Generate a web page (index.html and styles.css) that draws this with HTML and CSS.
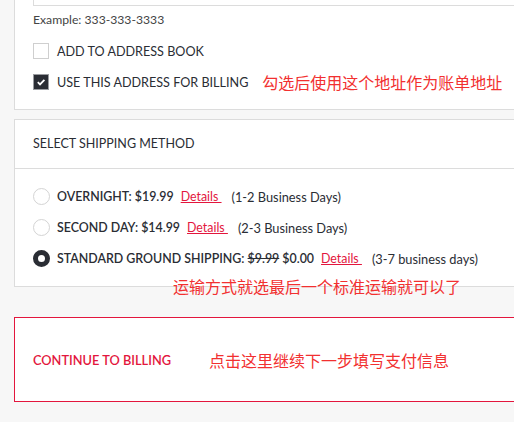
FILE: index.html
```html
<!DOCTYPE html>
<html lang="en">
<head>
    <meta charset="UTF-8">
    <meta name="viewport" content="width=device-width, initial-scale=1.0">
    <title>Shipping</title>
    <link rel="stylesheet" href="styles.css">
</head>
<body>
    <div class="page">
        <div class="card address">
            <div class="field"></div>
            <div class="hint">Example: 333-333-3333</div>
            <div class="check-row first">
                <span class="checkbox"></span>
                <span class="label">ADD TO ADDRESS BOOK</span>
            </div>
            <div class="check-row">
                <span class="checkbox checked">
                    <svg width="10" height="10" viewBox="0 0 10 10"><path d="M1.8 5.2 L4 7.4 L8.4 2.8" fill="none" stroke="#fff" stroke-width="1.8"/></svg>
                </span>
                <span class="label">USE THIS ADDRESS FOR BILLING</span>
                <span class="note note-billing">勾选后使用这个地址作为账单地址</span>
            </div>
        </div>

        <div class="card shipping">
            <div class="card-head">SELECT SHIPPING METHOD</div>
            <div class="options">
                <div class="option">
                    <span class="radio"></span>
                    <span class="opt-name">OVERNIGHT: $19.99</span>
                    <a class="details" href="#">Details </a>
                    <span class="days">(1-2 Business Days)</span>
                </div>
                <div class="option">
                    <span class="radio"></span>
                    <span class="opt-name">SECOND DAY: $14.99</span>
                    <a class="details" href="#">Details </a>
                    <span class="days">(2-3 Business Days)</span>
                </div>
                <div class="option">
                    <span class="radio selected"></span>
                    <span class="opt-name">STANDARD GROUND SHIPPING: <s>$9.99</s> $0.00</span>
                    <a class="details" href="#">Details </a>
                    <span class="days">(3-7 business days)</span>
                </div>
            </div>
            <span class="note note-shipping">运输方式就选最后一个标准运输就可以了</span>
        </div>

        <div class="continue">
            <span class="continue-text">CONTINUE TO BILLING</span>
            <span class="note note-continue">点击这里继续下一步填写支付信息</span>
        </div>
    </div>
</body>
</html>
```

FILE: styles.css
```css
body {
    margin: 0;
    background-color: #f7f7f7;
    font-family: Lato, "Noto Sans CJK SC", sans-serif;
    color: #2a2d34;
    overflow: hidden;
}
.page {
    padding-left: 14px;
    margin-right: -20px;
}
.card {
    background-color: white;
    border: 1px solid #dcdcdc;
}
.address {
    margin-top: -60px;
    padding: 20px 18px 19px;
}
.field {
    height: 45px;
    box-sizing: border-box;
    border: 1px solid #dcdcdc;
    margin-right: -18px;
}
.hint {
    margin-top: 6px;
    font-size: 12.2px;
    line-height: 15px;
    color: #444;
}
.check-row {
    display: flex;
    align-items: center;
    gap: 8px;
    margin-top: 15px;
    height: 16px;
    font-size: 12.6px;
    white-space: nowrap;
}
.check-row.first { margin-top: 16px; }
.checkbox {
    flex-shrink: 0;
    width: 16px;
    height: 16px;
    box-sizing: border-box;
    border: 1px solid #cfcfcf;
    background: white;
    display: flex;
    align-items: center;
    justify-content: center;
}
.checkbox.checked {
    background-color: #2a2d34;
    border-color: #9a9ca0;
}
.note {
    font-family: "Noto Sans CJK SC", sans-serif;
    color: #f23030;
    font-size: 16px;
    line-height: 18px;
    white-space: nowrap;
}
.note-billing {
    margin-left: 6px;
}
.shipping {
    margin-top: 9px;
    position: relative;
}
.card-head {
    height: 48px;
    line-height: 48px;
    padding-left: 18px;
    font-size: 12.5px;
    border-bottom: 1px solid #dcdcdc;
}
.options {
    padding: 19px 18px 19px;
    display: flex;
    flex-direction: column;
    gap: 14px;
}
.option {
    display: flex;
    align-items: center;
    height: 17px;
    font-size: 12.4px;
    white-space: nowrap;
}
.radio {
    flex-shrink: 0;
    width: 17px;
    height: 17px;
    box-sizing: border-box;
    border: 1px solid #d4d4d4;
    border-radius: 50%;
    margin-right: 7px;
}
.radio.selected {
    border: 5px solid #2a2d34;
    background: white;
}
.opt-name {
    font-weight: 600;
}
.details {
    color: #e3163d;
    margin-left: 7px;
    text-decoration: underline;
    white-space: pre;
}
.days {
    margin-left: 10px;
    font-size: 12.8px;
}
.note-shipping {
    position: absolute;
    left: 158px;
    bottom: -9px;
}
.continue {
    margin-top: 30px;
    height: 85px;
    box-sizing: border-box;
    background-color: white;
    border: 1px solid #e3163d;
    padding-left: 18px;
    display: flex;
    align-items: center;
    white-space: nowrap;
}
.continue-text {
    color: #e3163d;
    font-size: 12.8px;
    font-weight: 600;
    width: 176px;
}
```
